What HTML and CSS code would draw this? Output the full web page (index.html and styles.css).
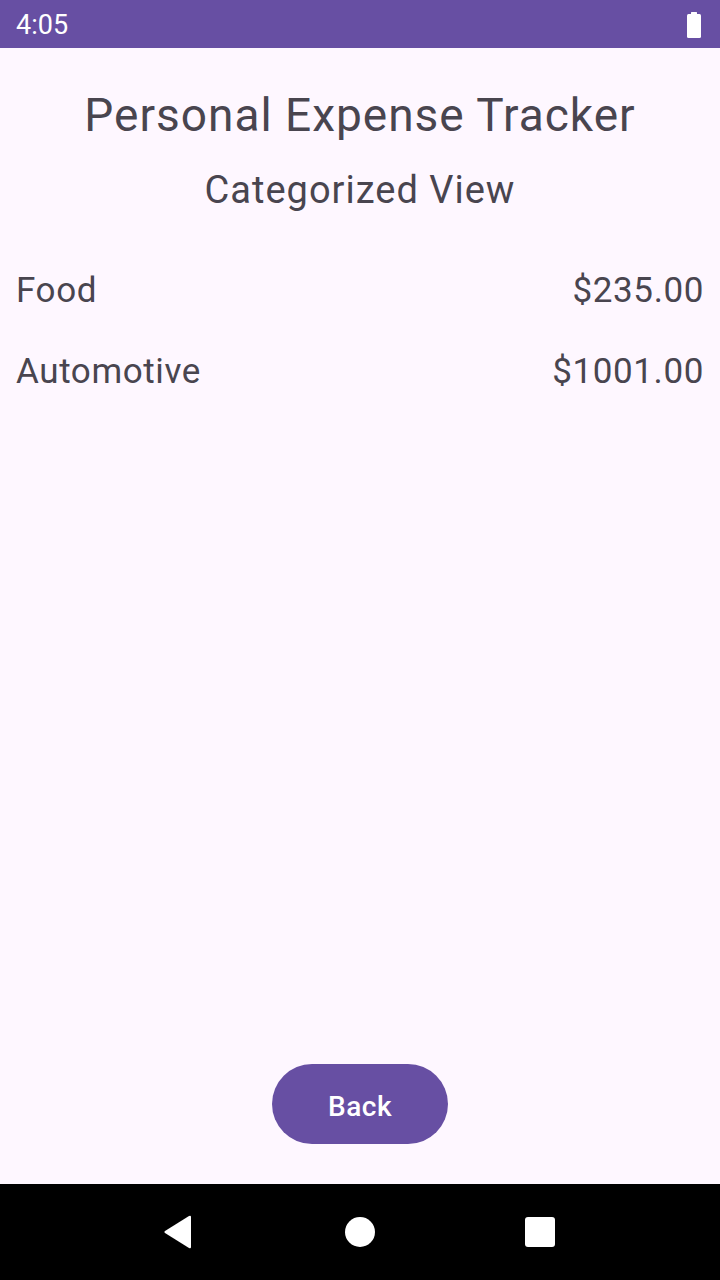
FILE: index.html
```html
<!DOCTYPE html>
<html>
<head>
<meta charset="utf-8">
<link rel="stylesheet" href="styles.css">
</head>
<body>
<div class="screen">
  <div class="status-bar">
    <span class="time">4:05</span>
    <svg class="battery" width="16" height="26" viewBox="0 0 16 26">
      <rect x="5" y="0" width="6" height="3" rx="0.5" fill="#fff"/>
      <rect x="1" y="2" width="14" height="24" rx="1.5" fill="#fff"/>
    </svg>
  </div>
  <main class="content">
    <h1 class="title">Personal Expense Tracker</h1>
    <h2 class="subtitle">Categorized View</h2>
    <div class="list">
      <div class="row"><span>Food</span><span>$235.00</span></div>
      <div class="row"><span>Automotive</span><span>$1001.00</span></div>
    </div>
    <div class="actions">
      <button class="back-btn">Back</button>
    </div>
  </main>
  <nav class="nav-bar">
    <svg width="30" height="34" viewBox="0 0 30 34" class="nav-back">
      <path d="M28 2 L28 32 Q28 34 26 33 L2 18 Q0.5 17 2 16 L26 1 Q28 0 28 2 Z" fill="#fff"/>
    </svg>
    <span class="nav-home"></span>
    <span class="nav-recent"></span>
  </nav>
</div>
</body>
</html>
```
FILE: styles.css
```css
html, body {
  margin: 0;
  padding: 0;
}
body {
  width: 720px;
  height: 1280px;
  font-family: Roboto, "Noto Sans", sans-serif;
  background: #FEF7FF;
  overflow: hidden;
}
.screen {
  display: flex;
  flex-direction: column;
  height: 1280px;
}
.status-bar {
  height: 48px;
  flex: none;
  background: #674FA3;
  display: flex;
  align-items: center;
  justify-content: space-between;
  padding: 0 18px 0 16px;
  color: #fff;
}
.time {
  font-size: 27px;
  line-height: 48px;
  margin-top: 2px;
}
.battery {
  display: block;
  margin-top: 1px;
}
.content {
  flex: 1;
  display: flex;
  flex-direction: column;
  padding: 37px 16px 40px 16px;
  color: #49454F;
}
.title {
  margin: 0;
  text-align: center;
  font-weight: 400;
  font-size: 46px;
  letter-spacing: 1px;
  line-height: 60px;
}
.subtitle {
  margin: 21px 0 0 0;
  text-align: center;
  font-weight: 400;
  font-size: 38px;
  letter-spacing: 1px;
  line-height: 48px;
}
.list {
  margin-top: 53px;
  display: flex;
  flex-direction: column;
  gap: 33px;
}
.row {
  display: flex;
  justify-content: space-between;
  font-size: 35px;
  letter-spacing: 0.6px;
  line-height: 48px;
  padding-right: 0;
}
.actions {
  margin-top: auto;
  display: flex;
  justify-content: center;
}
.back-btn {
  width: 176px;
  height: 80px;
  border: none;
  border-radius: 40px;
  background: #674FA3;
  color: #fff;
  font-family: Roboto, sans-serif;
  font-weight: 500;
  font-size: 28px;
  letter-spacing: 0.5px;
  padding: 4px 0 0 0;
}
.nav-bar {
  height: 96px;
  flex: none;
  background: #000;
  display: flex;
  align-items: center;
  padding-left: 163px;
}
.nav-back {
  display: block;
  margin-right: 152px;
}
.nav-home {
  width: 30px;
  height: 30px;
  border-radius: 50%;
  background: #fff;
  display: block;
}
.nav-recent {
  width: 30px;
  height: 30px;
  border-radius: 3px;
  background: #fff;
  display: block;
  margin-left: 150px;
}
```
